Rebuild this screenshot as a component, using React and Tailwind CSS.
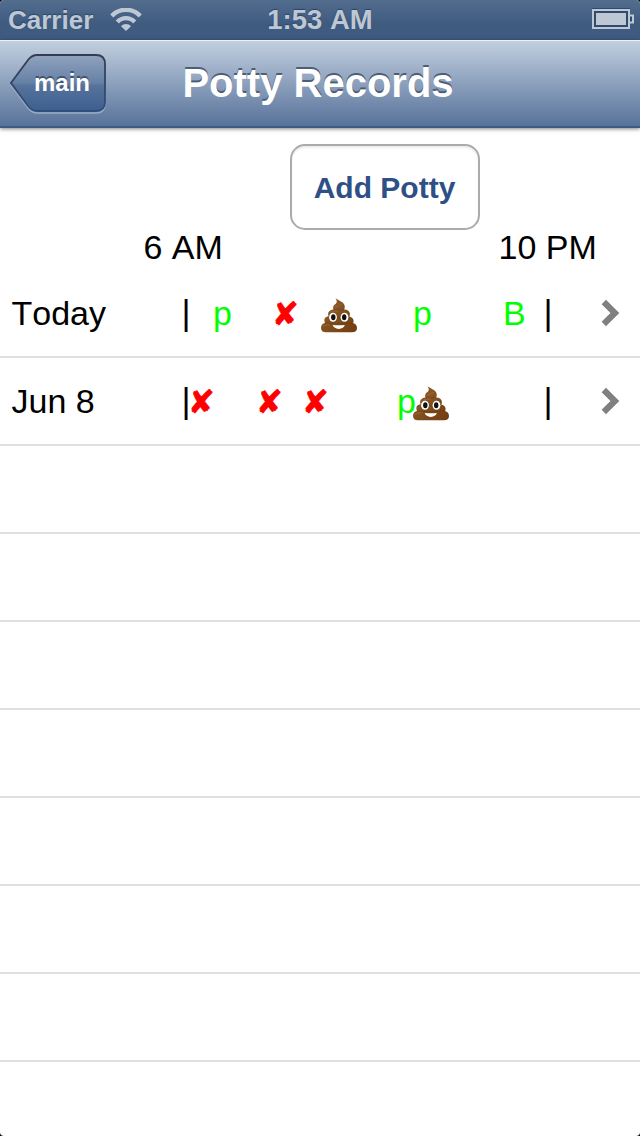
import React from 'react';

const EMPTY_ROWS = [1, 2, 3, 4, 5, 6, 7];

const RECORDS = [
  {
    day: 'Today',
    events: [
      { kind: 'pee', at: 213 },
      { kind: 'miss', at: 272 },
      { kind: 'poop', at: 321 },
      { kind: 'pee', at: 413 },
      { kind: 'both', at: 503 },
    ],
  },
  {
    day: 'Jun 8',
    events: [
      { kind: 'miss', at: 188 },
      { kind: 'miss', at: 256 },
      { kind: 'miss', at: 302 },
      { kind: 'pee', at: 397 },
      { kind: 'poop', at: 413 },
    ],
  },
];

function Poop() {
  return (
    <svg width="36" height="36" viewBox="0 0 36 36" className="mt-[27px] block">
      <defs>
        <linearGradient id="swirl" x1="0" y1="0" x2="1" y2="1">
          <stop offset="0" stopColor="#96602f" />
          <stop offset="0.5" stopColor="#82501f" />
          <stop offset="1" stopColor="#703b12" />
        </linearGradient>
      </defs>
      <path
        d="M14.5 1.5C19 3.8 24 6 23.8 9.8Q23.7 11.5 23.2 12.4Q28 12.8 28.8 16Q29.2 18 28.4 19.4Q32.6 20.4 32.6 24Q32.6 25.4 32 26C34.6 26.6 36 28.5 36 31C36 34 34.2 35.3 31 35.3H5C1.8 35.3 0 33.8 0 30.8C0 28 1.6 26.2 4 25.9C2.4 22 4 19.6 7.6 19.2C6.2 15.6 8 13.2 12.4 12.5C11.4 9 13.2 8 15.2 6.2Q16.6 4.2 14.5 1.5Z"
        fill="url(#swirl)"
      />
      <path d="M12.8 12.6Q18 14 23 12.2M8 19.2Q18 21.5 28.2 19.2M4.2 25.9Q16 27.8 31.8 25.8" fill="none" stroke="#4e250b" strokeWidth="0.9" opacity="0.3" />
      <path d="M14.4 10Q17 9.8 20.5 7.4M10.8 15Q13 14 17 14M2.6 29.2Q4 27.6 8 27.8" fill="none" stroke="#b17a43" strokeWidth="1" strokeLinecap="round" opacity="0.5" />
      <ellipse cx="12" cy="20.2" rx="3.9" ry="4.5" fill="#fff" />
      <ellipse cx="23.5" cy="20.2" rx="3.9" ry="4.5" fill="#fff" />
      <ellipse cx="12.3" cy="20.2" rx="2.2" ry="3" fill="#111" />
      <ellipse cx="23.2" cy="20.2" rx="2.2" ry="3" fill="#111" />
      <path d="M11.7 28Q17.7 28.7 23.8 28Q22.6 31.8 17.8 31.9Q13 31.8 11.7 28Z" fill="#fff" />
    </svg>
  );
}

function Marker({ kind }) {
  if (kind === 'poop') return <Poop />;
  if (kind === 'miss') {
    return (
      <span className="block font-['DejaVu_Sans'] text-[32px] leading-[88px] text-[#ff0000] [-webkit-text-stroke:0.8px_#ff0000]">✘</span>
    );
  }
  return <span className="block leading-[87px] text-[#00ff00]">{kind === 'pee' ? 'p' : 'B'}</span>;
}

function RecordRow({ day, events }) {
  return (
    <div className="relative flex h-[88px] items-center border-b-2 border-[#e0e0e0] text-[34px] leading-[88px]">
      <span className="w-[181.5px] pl-[11.5px]">{day}</span>
      <span className="w-[362px] text-[35px]">|</span>
      <span className="w-[55.5px] text-[35px]">|</span>
      {events.map((e) => (
        <div key={e.at} className="absolute top-0 h-[88px]" style={{ left: e.at }}>
          <Marker kind={e.kind} />
        </div>
      ))}
      <svg width="22" height="28" viewBox="0 0 22 28" className="mb-px">
        <path d="M4.8 3L15.9 14L4.8 25" fill="none" stroke="#808080" strokeWidth="6.2" />
      </svg>
    </div>
  );
}

function StatusBar() {
  return (
    <div className="grid h-10 grid-cols-3 items-center bg-linear-to-b from-[#536d8e] from-0% via-[#3f5b80] via-60% to-[#3f5b80] font-bold text-[#bec8d4] [text-shadow:0_-1px_1px_#2b4466]">
      <div className="flex items-center pl-2">
        <span className="text-[26px] leading-10">Carrier</span>
        <svg width="32" height="24" viewBox="0 0 32 24" className="ml-[17px]">
          <path d="M1.8 7.9C9.5 -.3 22.5 -.3 30.2 7.9" fill="none" stroke="#bec8d4" strokeWidth="4.4" />
          <path d="M7.3 13.9C12 8.8 20 8.8 24.7 13.9" fill="none" stroke="#bec8d4" strokeWidth="4.4" />
          <path d="M16 23L11 18.2C13.5 15.2 18.5 15.2 21 18.2Z" fill="#bec8d4" />
        </svg>
      </div>
      <span className="text-center text-[27.5px] leading-10">1:53 AM</span>
      <svg width="42" height="22" viewBox="0 0 42 22" className="mt-[-2px] mr-[6px] justify-self-end">
        <path d="M0 .5H38" stroke="#304b70" />
        <path d="M1 2H37V20H1Z" fill="#304b70" stroke="#bec8d4" strokeWidth="2" />
        <path d="M4 5H34V17H4Z" fill="#bec8d4" />
        <path d="M38 7.5H41V14.5H38" fill="#304b70" stroke="#bec8d4" strokeWidth="2" />
      </svg>
    </div>
  );
}

function NavBar() {
  return (
    <div className="grid h-[88px] grid-cols-[106px_1fr_110px] items-center border-t border-b-2 border-t-[#eef2f6] border-b-[#3d5a82] bg-linear-to-b from-[#c2cfdf] via-[#92a5c0] via-45% to-[#57729a] font-bold text-white shadow-[0_1px_4px_rgba(0,0,0,0.5)]">
      <button className="relative ml-[10px] h-[60px] w-[97px] pl-[7px] text-center text-[24px] leading-[58px] [text-shadow:0_-2px_0_#40546f]">
        <svg width="97" height="60" viewBox="0 0 97 60" className="absolute inset-0">
          <defs>
            <linearGradient id="back" x1="0" y1="0" x2="0" y2="1">
              <stop offset="0" stopColor="#91a3be" />
              <stop offset="0.5" stopColor="#6580a6" />
              <stop offset="0.55" stopColor="#55729b" />
              <stop offset="1" stopColor="#3d5f90" />
            </linearGradient>
            <linearGradient id="edge" x1="0" y1="0" x2="0" y2="1">
              <stop offset="0" stopColor="#343e4e" />
              <stop offset="1" stopColor="#304f7b" />
            </linearGradient>
          </defs>
          <path d="M27 3H86Q95 3 95 12V50Q95 59 86 59H27Q22 59 18 54L1 31L18 8Q22 3 27 3Z" fill="none" stroke="#a5b6cc" strokeWidth="1.5" opacity="0.8" />
          <path d="M27 1H86Q95 1 95 10V48Q95 57 86 57H27Q22 57 18 52L1 29L18 6Q22 1 27 1Z" fill="url(#back)" stroke="url(#edge)" strokeWidth="1.8" />
        </svg>
        <span className="relative block h-[60px] leading-[57px]">main</span>
      </button>
      <h1 className="h-[84px] text-center text-[40px] leading-[82px] [text-shadow:0_-2px_0_#4c5d75]">Potty Records</h1>
    </div>
  );
}

export default function App() {
  return (
    <div className="h-[1136px] w-[640px] overflow-hidden bg-black font-['Liberation_Sans',Arial,sans-serif] [font-kerning:none]">
      <div className="flex h-full flex-col overflow-hidden rounded-[4px] bg-white text-black">
        <StatusBar />
        <NavBar />
        <div className="flex h-[102px] items-end pl-[290px]">
          <button className="h-[86px] w-[190px] rounded-[15px] border-2 border-[#ababab] pt-[2px] pr-[1px] text-[30px] leading-[80px] font-bold text-[#2f4f87] shadow-[inset_0_2px_2px_#eeeeee]">
            Add Potty
          </button>
        </div>
        <div className="flex h-[40px] text-[34px] leading-[34px]">
          <span className="w-[356px] pl-[143.5px]">6 AM</span>
          <span className="pl-[142.5px]">10 PM</span>
        </div>
        {RECORDS.map((r) => (
          <RecordRow key={r.day} {...r} />
        ))}
        {EMPTY_ROWS.map((n) => (
          <div key={n} className="h-[88px] border-b-2 border-[#e0e0e0]" />
        ))}
      </div>
    </div>
  );
}
